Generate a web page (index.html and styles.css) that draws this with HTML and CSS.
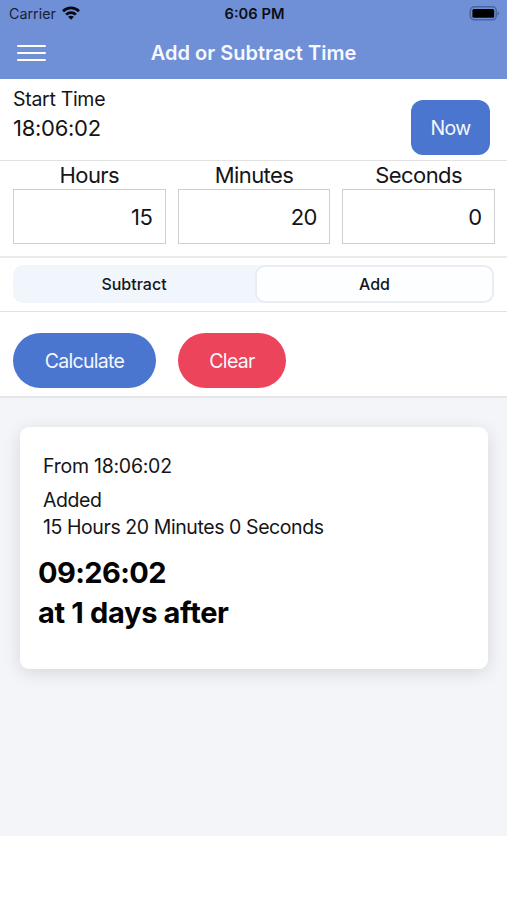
FILE: index.html
```html
<!DOCTYPE html>
<html lang="en">
<head>
<meta charset="utf-8">
<title>Add or Subtract Time</title>
<link rel="stylesheet" href="styles.css">
</head>
<body>
<header class="header">
  <div class="status">
    <span class="carrier"><span class="carrier-name">Carrier</span>
      <svg class="wifi" viewBox="0 0 18 14" width="18" height="14"><g fill="none" stroke="#07090f" stroke-width="2.7"><path d="M1 5.200C5.500.7 12.500.7 17 5.200"/><path d="M4.100 8.600c2.700-2.700 7.100-2.700 9.800 0"/></g><path d="M6.100 10.800c1.600-1.500 4.200-1.500 5.800 0L9 13.700z" fill="#07090f"/></svg>
    </span>
    <span class="clock">6:06 PM</span>
    <svg class="battery" viewBox="0 0 31 15" width="31" height="15"><rect x="1.300" y=".8" width="26" height="13" rx="4" fill="none" stroke="#4a649d" stroke-width="1.500"/><rect x="3.400" y="2.900" width="21.800" height="8.800" rx="1.500" fill="#000"/><path d="M28.700 5.200c2 .8 2 3.400 0 4.200z" fill="#4a649d"/></svg>
  </div>
  <div class="nav">
    <span class="menu"><i></i><i></i><i></i></span>
    <h1 class="title">Add or Subtract Time</h1>
  </div>
</header>
<main class="page">
  <section class="start">
    <div>
      <div class="start-label">Start Time</div>
      <div class="start-value">18:06:02</div>
    </div>
    <button class="now">Now</button>
  </section>
  <section class="fields">
    <label class="field">Hours<div class="box">15</div></label>
    <label class="field">Minutes<div class="box">20</div></label>
    <label class="field">Seconds<div class="box">0</div></label>
  </section>
  <section class="mode">
    <div class="segment"><span class="option">Subtract</span><span class="option selected">Add</span></div>
  </section>
  <section class="actions">
    <button class="pill calculate">Calculate</button>
    <button class="pill clear">Clear</button>
  </section>
  <section class="results">
    <div class="card">
      <p class="from">From 18:06:02</p>
      <p class="added">Added</p>
      <p class="amount">15 Hours 20 Minutes 0 Seconds</p>
      <p class="answer time">09:26:02</p>
      <p class="answer days">at 1 days after</p>
    </div>
  </section>
</main>
</body>
</html>
```
FILE: styles.css
```css
* { box-sizing: border-box; }
body { margin: 0; background: #fff; color: #151517; font-family: Inter, "Liberation Sans", sans-serif; }
p, h1 { margin: 0; white-space: nowrap; }
button { border: 0; padding: 0; font-family: inherit; color: #f4f7fd; white-space: nowrap; }
.header { height: 79px; background: #6f90d7; }
.status { height: 27px; display: grid; grid-template-columns: 1fr auto 1fr; align-items: center; padding: 0 7px 0 9px; font-size: 14.300px; }
.carrier { display: flex; align-items: center; gap: 6px; color: #1a2236; line-height: 27px; }
.wifi { margin-top: -1px; }
.clock { font-size: 14.700px; font-weight: 600; color: #0b0e17; }
.battery { justify-self: end; }
.nav { height: 52px; display: grid; grid-template-columns: 30px 1fr 30px; align-items: center; padding: 0 16px; }
.menu { display: grid; gap: 5px; width: 29px; margin-left: 1px; }
.menu i { height: 2.300px; background: #fff; border-radius: 1px; }
.title { text-align: center; font-size: 20px; font-weight: 600; color: #f6f9ff; line-height: 52px; }
.start { height: 82px; display: flex; justify-content: space-between; padding: 7px 17px 0 13px; border-bottom: 1px solid #e2e2e3; }
.start-label { font-size: 19.500px; line-height: 27px; letter-spacing: -.3px; }
.start-value { font-size: 22px; line-height: 30px; letter-spacing: -.28px; }
.now { width: 79px; height: 55px; margin-top: 14px; padding-top: 1px; border-radius: 12px; background: #4b76cf; font-size: 19.500px; letter-spacing: -.6px; }
.fields { height: 97px; display: grid; grid-template-columns: repeat(3, 1fr); gap: 12px; padding: 0 12px 0 13px; border-bottom: 2px solid #ebebec; }
.field { text-align: center; font-size: 22px; line-height: 28px; letter-spacing: -.6px; }
.box { height: 55px; border: 1px solid #cfcfcf; padding-right: 12.500px; text-align: right; line-height: 54px; }
.mode { height: 54px; padding: 7px 13px 0; border-bottom: 1px solid #e2e2e3; }
.segment { height: 38px; display: grid; grid-template-columns: 242px 1fr; background: #f1f5fc; border-radius: 10px; }
.option { text-align: center; font-size: 16px; font-weight: 500; line-height: 38px; }
.selected { border: 2px solid #e9ecf1; border-radius: 10px; background: #fdfeff; line-height: 34px; }
.actions { height: 86px; display: flex; gap: 22px; padding: 21px 13px 0; border-bottom: 2px solid #e5e6e9; }
.pill { height: 55px; border-radius: 28px; font-size: 19.500px; letter-spacing: -.7px; }
.calculate { width: 143px; background: #4b76cf; }
.clear { width: 108px; background: #ec445b; }
.results { height: 438px; padding: 29px 19px 0 20px; background: #f3f5f9; }
.card { height: 242px; padding: 26px 18px 0; border-radius: 9px; background: #fff; box-shadow: 0 4px 18px rgba(0,0,0,.12); }
.from, .added, .amount { padding-left: 5px; font-size: 19.500px; line-height: 27px; letter-spacing: -.42px; }
.from { margin-bottom: 7px; letter-spacing: -.25px; }
.amount { margin-bottom: 12px; }
.answer { font-size: 29px; font-weight: 700; line-height: 40px; letter-spacing: -.33px; color: #030303; }
.time { letter-spacing: -.6px; }
```
